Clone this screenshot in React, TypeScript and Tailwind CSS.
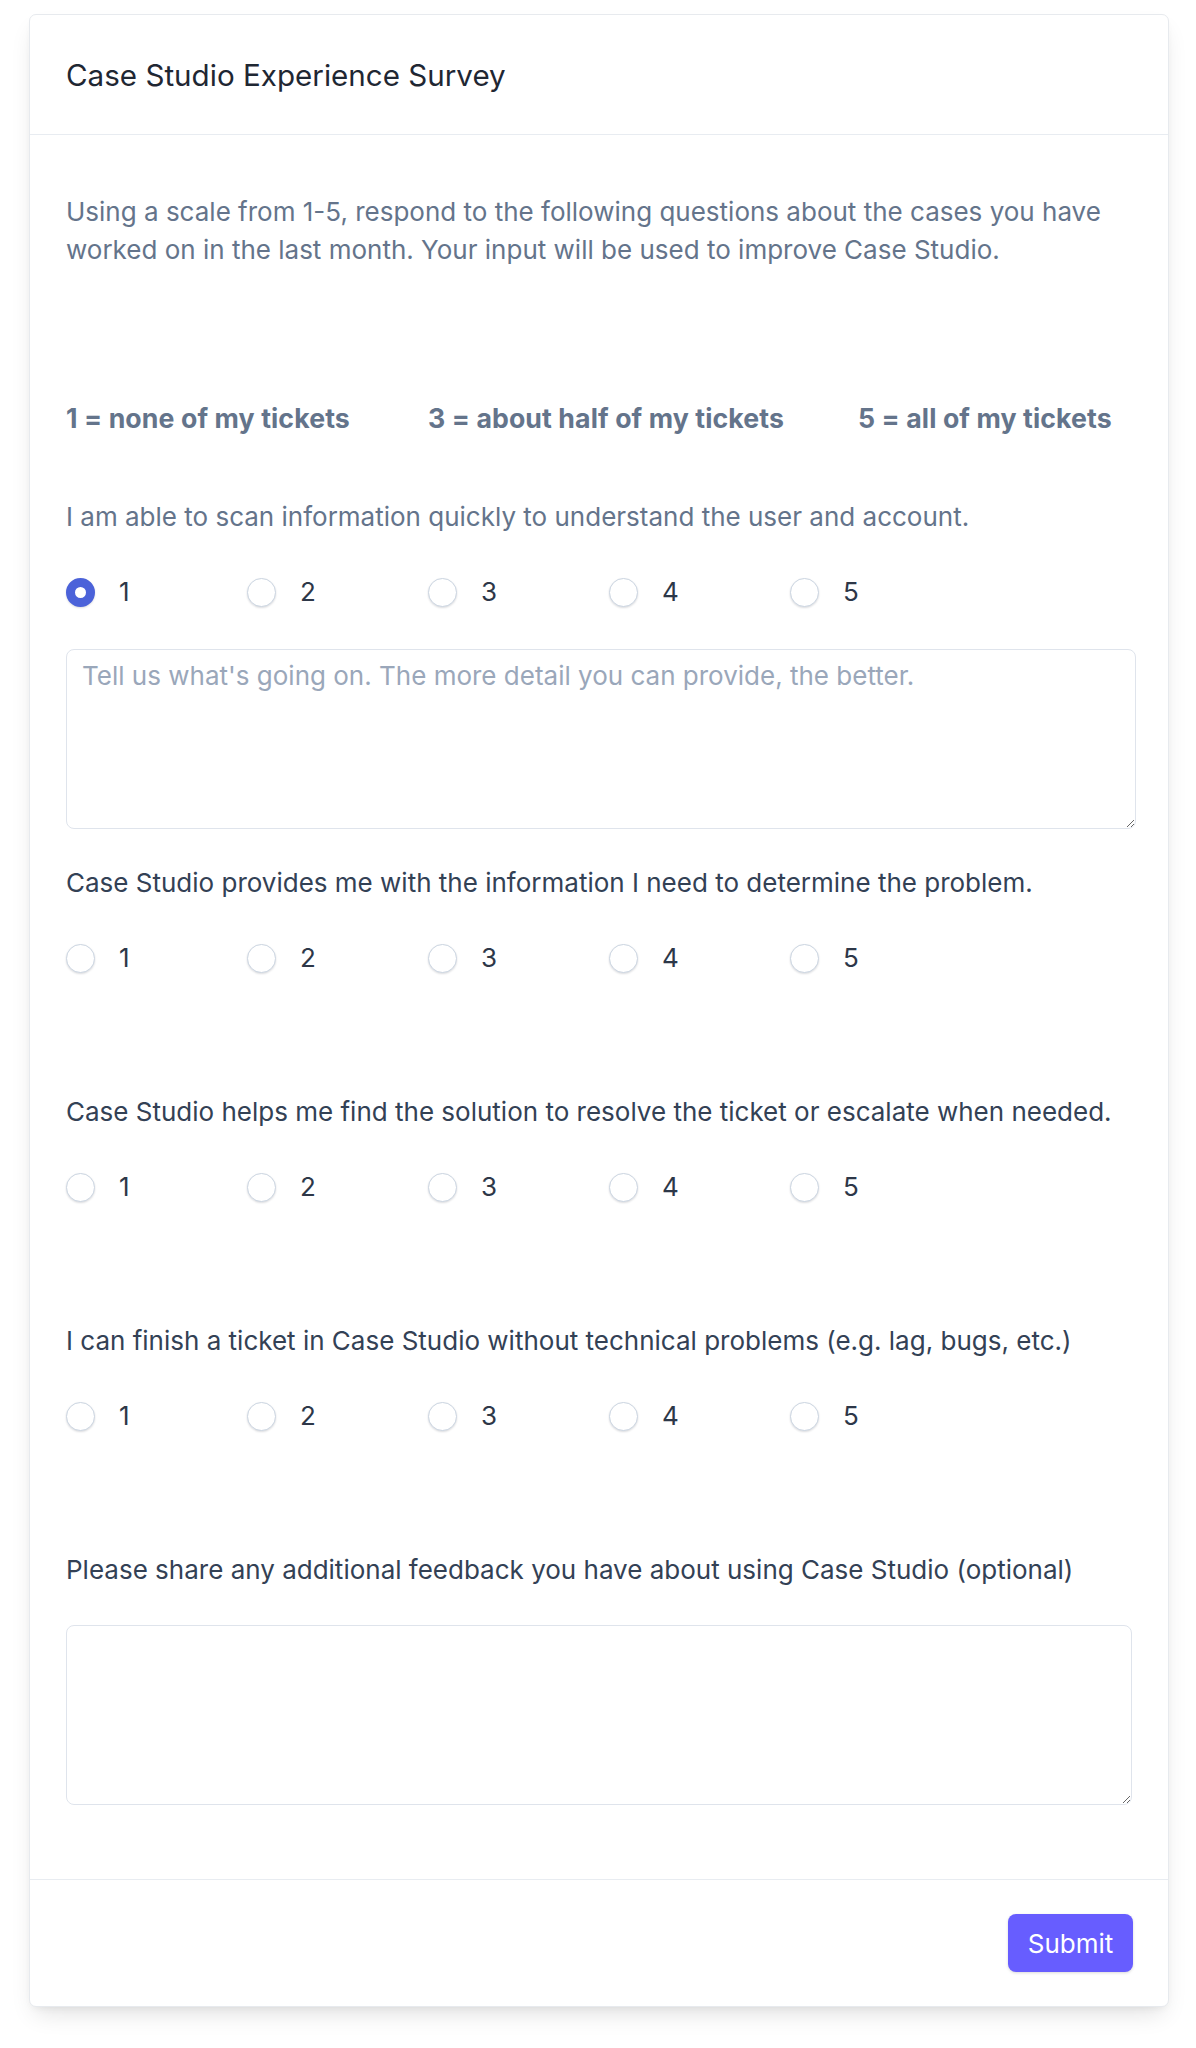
import { useState } from "react";

const questions = [
  {
    id: "scan",
    text: "I am able to scan information quickly to understand the user and account.",
    muted: true,
    withNotes: true,
  },
  {
    id: "info",
    text: "Case Studio provides me with the information I need to determine the problem.",
  },
  {
    id: "solution",
    text: "Case Studio helps me find the solution to resolve the ticket or escalate when needed.",
  },
  {
    id: "technical",
    text: "I can finish a ticket in Case Studio without technical problems (e.g. lag, bugs, etc.)",
  },
];

function RatingRow({
  name,
  value,
  onChange,
}: {
  name: string;
  value: number | null;
  onChange: (v: number) => void;
}) {
  return (
    <div className="flex h-[38px] items-center">
      {[1, 2, 3, 4, 5].map((n) => (
        <label key={n} className="flex w-[181px] cursor-pointer items-center">
          <input
            type="radio"
            name={name}
            checked={value === n}
            onChange={() => onChange(n)}
            className="h-[29px] w-[29px] shrink-0 cursor-pointer appearance-none rounded-full border border-[#cbd5e1] bg-white shadow-[0_1px_2px_rgba(15,23,42,0.15)] checked:border-[9px] checked:border-[#4b62d9]"
          />
          <span className="ml-[24px] text-[26px] leading-[38px] text-[#2d3748]">{n}</span>
        </label>
      ))}
    </div>
  );
}

export default function App() {
  const [answers, setAnswers] = useState<Record<string, number | null>>({
    scan: 1,
    info: null,
    solution: null,
    technical: null,
  });

  return (
    <div
      className="min-h-screen bg-white px-[29px] pt-[14px]"
      style={{ fontFamily: "Inter, 'Noto Sans', sans-serif" }}
    >
      <div className="w-[1140px] overflow-hidden rounded-[7px] border border-[#e7eaee] bg-white shadow-[0_12px_24px_-6px_rgba(0,0,0,0.12),0_4px_8px_-4px_rgba(0,0,0,0.08)]">
        {/* header */}
        <div className="border-b border-[#e8ecf1] px-[36px] pb-[40px] pt-[41px]">
          <h1 className="text-[29.6px] leading-[38px] text-[#1f2733]">Case Studio Experience Survey</h1>
        </div>

        {/* body */}
        <div className="px-[36px] pb-[74px] pt-[58px] text-[26px] leading-[38px]">
          <p className="text-[#64748b]">
            Using a scale from 1-5, respond to the following questions about the cases you have worked on in the last
            month. Your input will be used to improve Case Studio.
          </p>

          <div className="mt-[130px] flex text-[26.7px] font-bold tracking-[0.1px] text-[#64748b]">
            <span className="w-[362px] shrink-0">1 = none of my tickets</span>
            <span className="w-[430px] shrink-0">3 = about half of my tickets</span>
            <span>5 = all of my tickets</span>
          </div>

          {questions.map((q, i) => (
            <div key={q.id} className={i === 0 ? "mt-[61px]" : i === 1 ? "mt-[35px]" : "mt-[116px]"}>
              <p className={q.muted ? "text-[#64748b]" : "text-[#334155]"}>{q.text}</p>
              <div className="mt-[37px]">
                <RatingRow
                  name={q.id}
                  value={answers[q.id]}
                  onChange={(v) => setAnswers({ ...answers, [q.id]: v })}
                />
              </div>
              {q.withNotes && (
                <textarea
                  placeholder="Tell us what's going on. The more detail you can provide, the better."
                  className="mt-[38px] block h-[180px] w-[1070px] rounded-[8px] border border-[#dfe4ec] px-[15px] py-[7px] text-[26px] leading-[38px] text-[#334155] placeholder:text-[#9aa7ba] focus:outline-none"
                />
              )}
            </div>
          ))}

          <p className="mt-[116px] text-[#334155]">
            Please share any additional feedback you have about using Case Studio (optional)
          </p>
          <textarea className="mt-[36px] block h-[180px] w-[1066px] rounded-[8px] border border-[#dfe4ec] px-[15px] py-[7px] text-[26px] leading-[38px] text-[#334155] focus:outline-none" />
        </div>

        {/* footer */}
        <div className="flex justify-end border-t border-[#e8ecf1] pb-[34px] pl-[36px] pr-[35px] pt-[34px]">
          <button className="h-[58px] w-[125px] rounded-[8px] bg-[#675dff] text-[26px] text-white shadow-[0_1px_3px_rgba(0,0,0,0.15)]">
            Submit
          </button>
        </div>
      </div>
    </div>
  );
}
